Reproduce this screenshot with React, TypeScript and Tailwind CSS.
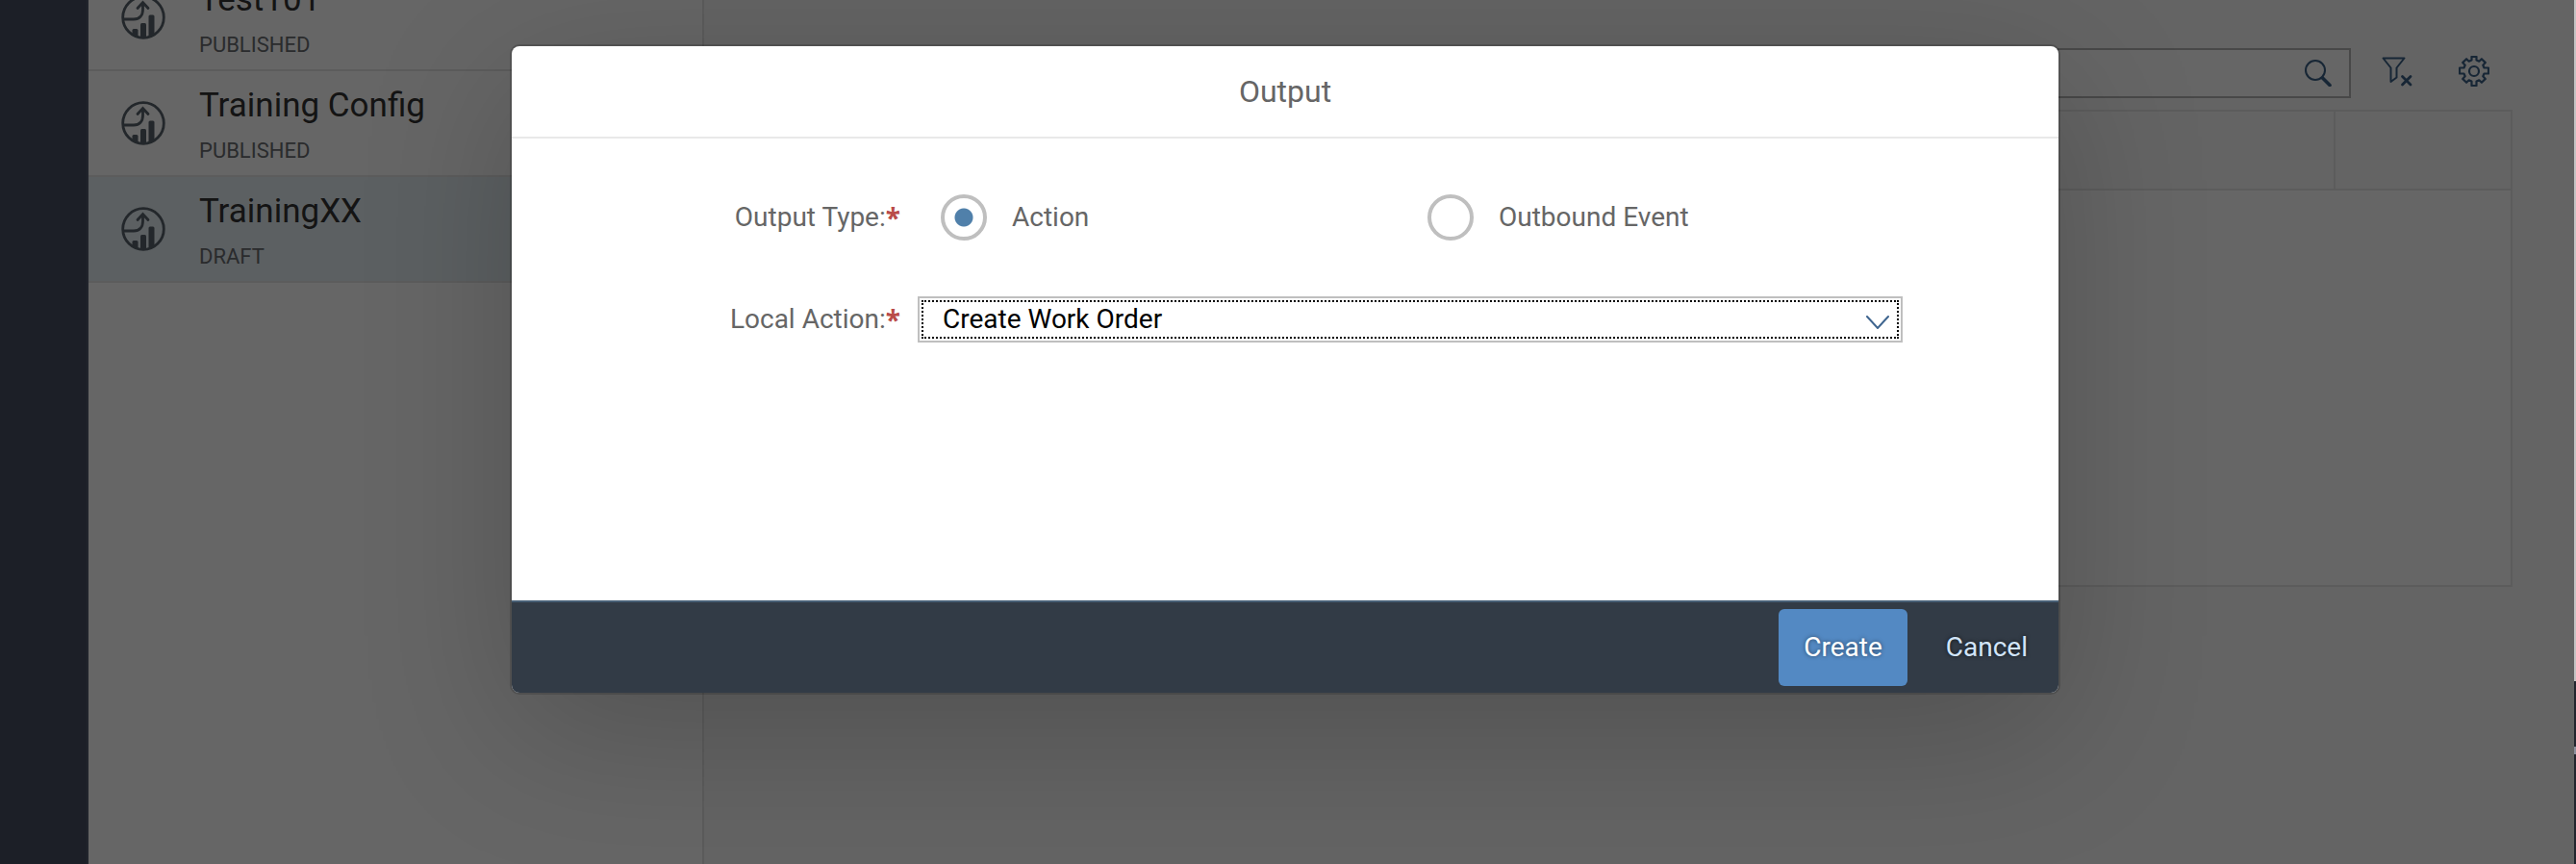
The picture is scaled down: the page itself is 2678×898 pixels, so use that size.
import React from "react";

type Item = { name: string; status: string; selected?: boolean };

const items: Item[] = [
  { name: "Test101", status: "PUBLISHED" },
  { name: "Training Config", status: "PUBLISHED" },
  { name: "TrainingXX", status: "DRAFT", selected: true },
];

function GrowthIcon() {
  return (
    <svg viewBox="0 0 46 46" className="size-[46px] shrink-0 text-[#57626b]" fill="none" stroke="currentColor" aria-hidden="true">
      <circle cx="23" cy="23" r="21.3" strokeWidth="2.8" />
      <path d="M3 25h10c6 0 9.500-4 9.500-10V8M17 13.500L22.500 7.500l5.500 6" strokeWidth="2.800" strokeLinecap="round" />
      <g fill="currentColor" stroke="none">
        <path d="M11.500 36.500a1.500 1.500 0 0 1 1.500-1.500h3a1.500 1.500 0 0 1 1.500 1.500V44l-6-3z" />
        <path d="M20 30.500a1.500 1.500 0 0 1 1.500-1.500h3a1.500 1.500 0 0 1 1.500 1.500V45h-6z" />
        <path d="M28.500 22a1.500 1.500 0 0 1 1.500-1.500h3a1.500 1.500 0 0 1 1.500 1.500v20l-6 2z" />
      </g>
    </svg>
  );
}

function SearchIcon() {
  return (
    <svg viewBox="0 0 28 28" className="size-7" fill="none" stroke="currentColor" aria-hidden="true">
      <circle cx="11" cy="11" r="10" strokeWidth="2" />
      <path d="M18.500 19l7.500 7.500" strokeWidth="3.600" strokeLinecap="round" />
    </svg>
  );
}

function ClearFilterIcon() {
  return (
    <svg viewBox="0 0 32 32" className="size-8" fill="none" stroke="currentColor" strokeLinejoin="round" strokeLinecap="round" aria-hidden="true">
      <path d="M1.500 2.500h22l-8 10v10l-6 4.500V12.500z" strokeWidth="2" />
      <path d="M21.500 21.500l8.500 8.500M30 21.500l-8.500 8.500" strokeWidth="2.800" />
    </svg>
  );
}

function GearIcon() {
  return (
    <svg viewBox="0 0 32 32" className="size-8" fill="none" stroke="currentColor" strokeWidth="2.200" strokeLinejoin="round" aria-hidden="true">
      <circle cx="16" cy="16" r="5" />
      <path d="M13.500 1h5v3.500l2.800 1.200 2.600-2.500 3.900 3.900-2.500 2.600 1.200 2.800H31v6h-4.500l-1.200 2.800 2.500 2.600-3.900 3.900-2.600-2.500-2.800 1.200V31h-5v-4.500l-2.800-1.200-2.600 2.500-3.900-3.900 2.500-2.600-1.200-2.800H1v-6h4.500l1.200-2.800-2.500-2.600 3.900-3.900 2.600 2.500 2.800-1.200z" />
    </svg>
  );
}

function FormLabel({ htmlFor, id, text }: { htmlFor?: string; id?: string; text: string }) {
  return (
    <label htmlFor={htmlFor} id={id} className="flex w-[404px] shrink-0 justify-end text-[28px] leading-8 text-[#666]">
      {text}
      <span className="font-['Open_Sans','Liberation_Sans',sans-serif] font-bold text-[#b94a48]">*</span>
    </label>
  );
}

function RadioOption({ label, checked }: { label: string; checked?: boolean }) {
  return (
    <label className="flex flex-1 items-center gap-[26px] text-[28px] leading-8 text-[#666]">
      <input
        type="radio"
        name="output-type"
        defaultChecked={checked}
        className="size-12 appearance-none rounded-full border-4 border-[#bfbfbf] bg-white checked:bg-[radial-gradient(circle,#5080aa_9px,transparent_10px)]"
      />
      {label}
    </label>
  );
}

function OutputDialog() {
  return (
    <div role="dialog" aria-labelledby="dialog-title" className="flex w-[1608px] max-w-full flex-col overflow-hidden rounded-lg bg-white shadow-[0_0_0_2px_rgba(0,0,0,0.15),0_40px_160px_0_rgba(0,0,0,0.2)]">
      <header className="flex h-24 items-center justify-center border-b-2 border-[#e9e9e9]">
        <h2 id="dialog-title" className="text-[32px] leading-10 text-[#666]">Output</h2>
      </header>
      <form className="flex h-[480px] flex-col pt-[58px]">
        <div className="flex items-center" role="radiogroup" aria-labelledby="type-label">
          <FormLabel id="type-label" text="Output Type:" />
          <div className="ml-[42px] flex w-[1012px]">
            <RadioOption label="Action" checked />
            <RadioOption label="Outbound Event" />
          </div>
        </div>
        <div className="mt-[58px] flex items-center">
          <FormLabel htmlFor="local-action" text="Local Action:" />
          <div className="relative ml-[18px] w-[1024px]">
            <select
              id="local-action"
              className="block h-12 w-full appearance-none border-2 border-[#bfbfbf] bg-white pl-6 pr-12 text-[28px] leading-8 text-black outline-2 -outline-offset-6 outline-dotted outline-black"
            >
              <option>Create Work Order</option>
            </select>
            <svg viewBox="0 0 24 14" className="pointer-events-none absolute right-[14px] top-5 h-[14px] w-6" fill="none" stroke="#3f658f" strokeWidth="2" strokeLinecap="round" aria-hidden="true">
              <path d="M1 1l11 12L23 1" />
            </svg>
          </div>
        </div>
      </form>
      <footer className="flex h-24 items-center justify-end gap-10 border-t-2 border-[#475e75] bg-[#323b46] pr-8 text-[28px] leading-8">
        <button type="button" className="h-20 rounded-md bg-[#5389c3] px-[26px] text-white [text-shadow:0_0_4px_rgba(0,0,0,0.5)]">Create</button>
        <button type="button" className="h-20 text-[#d1e4f8] [text-shadow:0_0_4px_rgba(0,0,0,0.7)]">Cancel</button>
      </footer>
    </div>
  );
}

export default function App() {
  return (
    <div className="relative flex h-screen overflow-hidden bg-[#fafafa] font-[Roboto,'Liberation_Sans',sans-serif]">
      <nav className="w-[92px] shrink-0 border-r-2 border-[#545b6e] bg-[#464e62]" />
      <aside className="w-[640px] shrink-0 border-r-2 border-[#e5e5e5] bg-white">
        <ul className="-mt-9">
          {items.map((item) => (
            <li
              key={item.name}
              className={`flex h-[110px] items-center gap-[35px] border-b-2 border-[#e5e5e5] pl-[34px] ${item.selected ? "bg-[#e6eff5]" : ""}`}
            >
              <GrowthIcon />
              <div className="pt-[3px]">
                <div className="text-[35px] leading-[44px] text-[#333]">{item.name}</div>
                <div className="mt-[11px] text-[22px] leading-7 text-[#6a6d70]">{item.status}</div>
              </div>
            </li>
          ))}
        </ul>
      </aside>
      <main className="flex flex-1 flex-col pl-8 pr-[66px] pt-[50px]">
        <div className="flex items-center justify-end text-[#3a5f85]">
          <div className="flex h-[52px] w-[600px] items-center border-2 border-[#b5b5b5] bg-white pr-[18px]">
            <input type="search" aria-label="Search" className="h-full min-w-0 flex-1 outline-none" />
            <button type="button" aria-label="Search"><SearchIcon /></button>
          </div>
          <button type="button" aria-label="Clear filter" className="ml-8 pb-1"><ClearFilterIcon /></button>
          <button type="button" aria-label="Settings" className="ml-12 mr-6 pb-1"><GearIcon /></button>
        </div>
        <table className="mt-3 w-full table-fixed border-separate border-spacing-0 border-2 border-[#e5e5e5] bg-white">
          <thead>
            <tr className="h-[82px] bg-[#f9f9f9]">
              <th className="border-b-2 border-r-2 border-[#e5e5e5]" />
              <th className="w-[182px] border-b-2 border-[#e5e5e5]" />
            </tr>
          </thead>
          <tbody>
            <tr className="h-[410px]">
              <td colSpan={2} />
            </tr>
          </tbody>
        </table>
      </main>
      <div className="absolute inset-0 flex items-start justify-center bg-black/60 pr-1.5 pt-12">
        <OutputDialog />
      </div>
      <div className="absolute inset-y-0 right-0 flex w-0.5 flex-col">
        <div className="h-[708px] bg-[#c4c4c4]" />
        <div className="h-[68px] bg-[#22252e]" />
        <div className="h-2 bg-[#8b8f9c]" />
        <div className="flex-1 bg-[#22252e]" />
      </div>
    </div>
  );
}
